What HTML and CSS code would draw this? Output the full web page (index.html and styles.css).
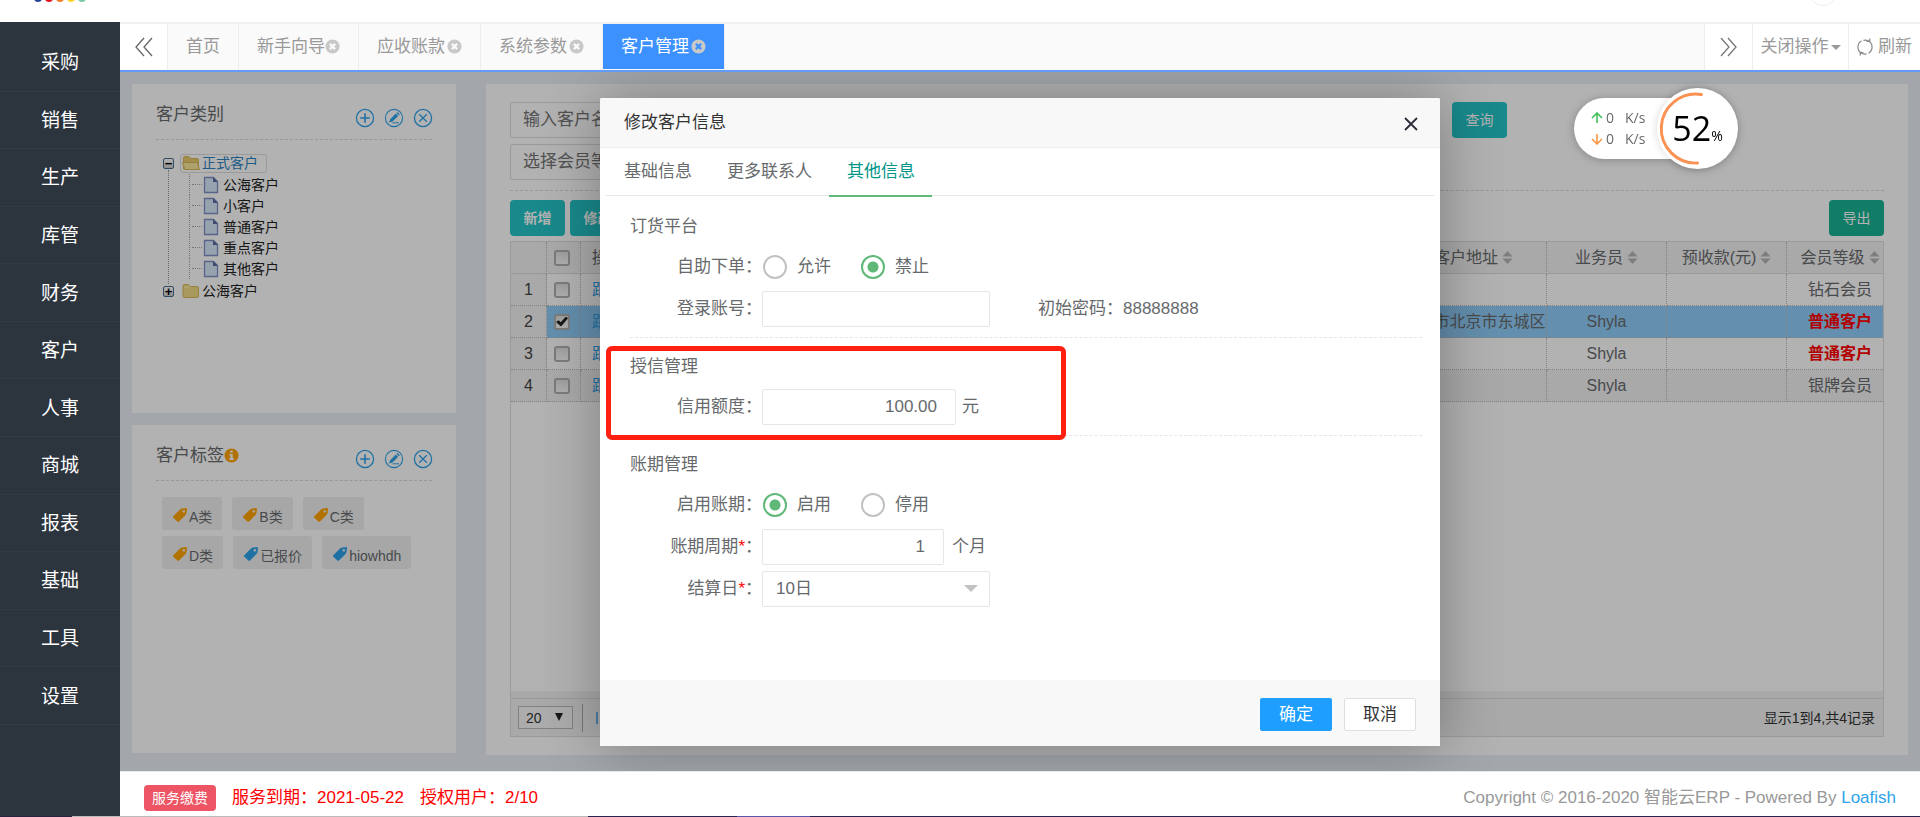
FILE: index.html
```html
<!DOCTYPE html>
<html lang="zh-CN">
<head>
<meta charset="utf-8">
<meta name="viewport" content="width=device-width, initial-scale=1">
<title>智能云ERP - 客户管理</title>
<link rel="stylesheet" href="styles.css">
</head>
<body>
<svg class="defs" aria-hidden="true">
  <symbol id="i-close" viewBox="0 0 16 16"><circle cx="8" cy="8" r="7.5" fill="#c8c8c8"/><path d="M5.2 5.2l5.6 5.6M10.8 5.2l-5.6 5.6" stroke="var(--cross, #fafafa)" stroke-width="2.4"/></symbol>
  <symbol id="i-add" viewBox="0 0 20 20"><g fill="none" stroke="currentColor" stroke-width="1.3"><circle cx="10" cy="10" r="8.6"/><path d="M10 5.2v9.6M5.2 10h9.6" stroke-width="1.6"/></g></symbol>
  <symbol id="i-edit" viewBox="0 0 20 20"><circle cx="10" cy="10" r="8.6" fill="none" stroke="currentColor" stroke-width="1.1"/><path d="M5 14.6l1.2-3.4 5.6-5.6 2.3 2.3-5.6 5.6zM12.5 4.9l1-1 2.3 2.3-1 1z" fill="currentColor"/><path d="M8.5 14.8h6.5" stroke="currentColor"/></symbol>
  <symbol id="i-del" viewBox="0 0 20 20"><g fill="none" stroke="currentColor" stroke-width="1.3"><circle cx="10" cy="10" r="8.6"/><path d="M6.2 6.2l7.6 7.6M13.8 6.2l-7.6 7.6"/></g></symbol>
  <symbol id="i-file" viewBox="0 0 16 18"><path d="M1.5 1.5h9l4 4v11h-13z" fill="#d9e8fb" stroke="#7f90c4" stroke-width="1.3"/><path d="M10 1v5h5z" fill="#5c6ca5"/></symbol>
  <symbol id="i-folder" viewBox="0 0 18 16"><path d="M1 3q0-1.500 1.500-1.500h4l2 2H15q1.500 0 1.500 1.500v8q0 1.500-1.500 1.500H2.500Q1 14.500 1 13z" fill="#f3dc84" stroke="#d8b95a"/><path d="M2.500 4h5" stroke="#fff3c0"/></symbol>
  <symbol id="i-folder-open" viewBox="0 0 18 16"><path d="M1.500 14V3q0-1.500 1.500-1.500h4l2 2h6q1.500 0 1.500 1.500v9z" fill="#e9cb6e" stroke="#d8b95a"/><path d="M.5 7.500h15l2 7H2.800z" fill="#f9e79a" stroke="#d8b95a"/></symbol>
  <symbol id="i-tag" viewBox="0 0 16 16"><path d="M1.300 9.300L8 2.600Q9 1.600 10.500 1.500L14 1q1.200 0 1 1.200L14.500 6q-.2 1.200-1 2L7 14.600q-.8.8-1.600 0L1.300 10.800q-.8-.8 0-1.500zM11.800 3a1.300 1.300 0 1 0 .01 0z" fill="currentColor" fill-rule="evenodd"/></symbol>
  <symbol id="i-sort" viewBox="0 0 12 14"><path d="M6 0l5.500 6H.5zM6 14l5.500-6H.5z" fill="#b5b5b5"/></symbol>
</svg>

<header class="topbar">
  <div class="logo"><i class="dot navy"></i><i class="dot red"></i><i class="dot orange"></i><i class="dot yellow"></i><i class="dot mint"></i></div>
  <div class="avatar"></div>
</header>

<div class="app">
  <nav class="sidebar">
    <a href="#">采购</a><a href="#">销售</a><a href="#">生产</a><a href="#">库管</a><a href="#">财务</a><a href="#">客户</a><a href="#">人事</a><a href="#">商城</a><a href="#">报表</a><a href="#">基础</a><a href="#">工具</a><a href="#">设置</a>
  </nav>

  <div class="main">
    <div class="tabbar">
      <button class="tool" aria-label="向左"><svg width="22" height="22" viewBox="0 0 22 22" fill="none" stroke="#666" stroke-width="1.3"><path d="M11 2L3 11l8 9M19 2l-8 9 8 9"/></svg></button>
      <a class="tab" href="#">首页</a>
      <a class="tab tight" href="#">新手向导<svg class="x"><use href="#i-close"/></svg></a>
      <a class="tab" href="#">应收账款<svg class="x"><use href="#i-close"/></svg></a>
      <a class="tab" href="#">系统参数<svg class="x"><use href="#i-close"/></svg></a>
      <a class="tab active" href="#">客户管理<svg class="x"><use href="#i-close"/></svg></a>
      <div class="tabtools">
        <button class="tool" aria-label="向右"><svg width="22" height="22" viewBox="0 0 22 22" fill="none" stroke="#777" stroke-width="1.3"><path d="M3 2l8 9-8 9M10 2l8 9-8 9"/></svg></button>
        <button class="tool closeop">关闭操作<i class="caret"></i></button>
        <button class="tool refresh"><svg width="16" height="18" viewBox="0 0 16 18" fill="none" stroke="#888" stroke-width="1.200"><path d="M4.500 15.200A7 7 0 0 1 4.500 3M11.500 3a7 7 0 0 1 0 12.200M6.500 2.300A7 7 0 0 1 12 3.200M9.500 15.800A7 7 0 0 1 4 15M12.800.5v3H9.500M3.200 17.500v-3H6.500"/></svg>刷新</button>
      </div>
    </div>

    <div class="content">
      <div class="left">
        <section class="card">
          <div class="cardhead"><h2>客户类别</h2>
            <div class="acts"><button aria-label="新增"><svg><use href="#i-add"/></svg></button><button aria-label="编辑"><svg><use href="#i-edit"/></svg></button><button aria-label="删除"><svg><use href="#i-del"/></svg></button></div>
          </div>
          <ul class="tree">
            <li class="open"><div class="node"><span class="toggle">−</span><span class="pick"><svg class="fold"><use href="#i-folder-open"/></svg>正式客户</span></div>
              <ul>
                <li><svg><use href="#i-file"/></svg>公海客户</li>
                <li><svg><use href="#i-file"/></svg>小客户</li>
                <li><svg><use href="#i-file"/></svg>普通客户</li>
                <li><svg><use href="#i-file"/></svg>重点客户</li>
                <li><svg><use href="#i-file"/></svg>其他客户</li>
              </ul>
            </li>
            <li><div class="node"><span class="toggle">+</span><span class="leaf"><svg class="fold"><use href="#i-folder"/></svg>公海客户</span></div></li>
          </ul>
        </section>
        <section class="card">
          <div class="cardhead"><h2>客户标签<svg class="info" viewBox="0 0 16 16"><circle cx="8" cy="8" r="7.500" fill="#ffa400"/><path d="M6.700 2.800h2.600v2.200H6.700zM5.800 6.300h3.500v4.700h1.200v1.700H5.700V11h1.100V8h-1z" fill="#fff"/></svg></h2>
            <div class="acts"><button aria-label="新增标签"><svg><use href="#i-add"/></svg></button><button aria-label="编辑标签"><svg><use href="#i-edit"/></svg></button><button aria-label="删除标签"><svg><use href="#i-del"/></svg></button></div>
          </div>
          <div class="tags">
            <span class="tag"><svg><use href="#i-tag"/></svg>A类</span>
            <span class="tag"><svg><use href="#i-tag"/></svg>B类</span>
            <span class="tag"><svg><use href="#i-tag"/></svg>C类</span>
            <span class="tag"><svg><use href="#i-tag"/></svg>D类</span>
            <span class="tag blue"><svg><use href="#i-tag"/></svg>已报价</span>
            <span class="tag blue"><svg><use href="#i-tag"/></svg>hiowhdh</span>
          </div>
        </section>
      </div>

      <section class="card right">
        <div class="search">
          <div class="fields">
            <input class="box" type="text" placeholder="输入客户名称" aria-label="客户名称">
            <input class="box" type="text" placeholder="选择会员等级" aria-label="会员等级">
          </div>
          <button class="btn query">查询</button>
        </div>
        <div class="actions"><button class="btn bold">新增</button><button class="btn bold">修改</button><button class="btn green">导出</button></div>
        <div class="grid">
          <table>
            <colgroup><col class="c-num"><col class="c-check"><col class="c-op"><col><col class="c-addr"><col class="c-mid"><col class="c-mid"><col class="c-level"></colgroup>
            <thead><tr><th></th><th><input type="checkbox" aria-label="全选"></th><th class="op">操作</th><th></th><th>客户地址<svg class="sort"><use href="#i-sort"/></svg></th><th>业务员<svg class="sort"><use href="#i-sort"/></svg></th><th>预收款(元)<svg class="sort"><use href="#i-sort"/></svg></th><th class="lv">会员等级<svg class="sort"><use href="#i-sort"/></svg></th></tr></thead>
            <tbody>
              <tr><td class="num">1</td><td><input type="checkbox" aria-label="选择第1行"></td><td class="op"><a href="#">跟进</a></td><td></td><td></td><td></td><td></td><td class="lv">钻石会员</td></tr>
              <tr class="sel"><td class="num">2</td><td><input type="checkbox" checked aria-label="选择第2行"></td><td class="op"><a href="#">跟进</a></td><td></td><td class="addr">北京市北京市东城区</td><td>Shyla</td><td></td><td class="lv hot">普通客户</td></tr>
              <tr><td class="num">3</td><td><input type="checkbox" aria-label="选择第3行"></td><td class="op"><a href="#">跟进</a></td><td></td><td></td><td>Shyla</td><td></td><td class="lv hot">普通客户</td></tr>
              <tr class="alt"><td class="num">4</td><td><input type="checkbox" aria-label="选择第4行"></td><td class="op"><a href="#">跟进</a></td><td></td><td></td><td>Shyla</td><td></td><td class="lv">银牌会员</td></tr>
            </tbody>
          </table>
          <div class="scroll"></div>
          <div class="pager">
            <span class="pagesize"><select aria-label="每页条数"><option>20</option></select></span>
            <span class="sep"></span>
            <button class="first" aria-label="首页"><svg width="16" height="16" viewBox="0 0 16 16" fill="#6ab4ea"><path d="M1 2h2v12H1zM14 2v12L5 8z"/></svg></button>
            <span class="count">显示1到4,共4记录</span>
          </div>
        </div>
      </section>

      <div class="overlay">
        <form class="modal" role="dialog" aria-labelledby="mt">
          <div class="mhead"><h1 id="mt">修改客户信息</h1><button type="button" aria-label="关闭"><svg width="16" height="16" viewBox="0 0 16 16" stroke="#2d2c3b" stroke-width="1.800"><path d="M2 2l12 12M14 2L2 14"/></svg></button></div>
          <div class="mtabs"><a href="#">基础信息</a><a href="#">更多联系人</a><a href="#" class="on">其他信息</a></div>
          <div class="mbody">
            <fieldset>
              <legend>订货平台</legend>
              <div class="row"><span class="lab">自助下单：</span><label class="radio"><input type="radio" name="self">允许</label><label class="radio"><input type="radio" name="self" checked>禁止</label></div>
              <div class="row"><label class="lab" for="acct">登录账号：</label><input class="field wide" id="acct" type="text"><span class="pwd">初始密码：88888888</span></div>
            </fieldset>
            <fieldset class="credit">
              <legend>授信管理</legend>
              <div class="row"><label class="lab" for="limit">信用额度：</label><input class="field num limit" id="limit" type="text" value="100.00"><span class="unit">元</span></div>
              <span class="mark"></span>
            </fieldset>
            <fieldset>
              <legend>账期管理</legend>
              <div class="row"><span class="lab">启用账期：</span><label class="radio"><input type="radio" name="term" checked>启用</label><label class="radio"><input type="radio" name="term">停用</label></div>
              <div class="row"><label class="lab" for="cyc">账期周期<b>*</b>：</label><input class="field num cycle" id="cyc" type="text" value="1"><span class="unit months">个月</span></div>
              <div class="row"><label class="lab" for="day">结算日<b>*</b>：</label><span class="pickday"><select class="field wide" id="day"><option>10日</option></select></span></div>
            </fieldset>
          </div>
          <div class="mfoot"><button type="button" class="ok">确定</button><button type="button" class="cancel">取消</button></div>
        </form>
      </div>

      <div class="meter">
        <div class="speeds">
          <div><svg width="12" height="12" viewBox="0 0 12 12" fill="none" stroke="#41c05b" stroke-width="1.600"><path d="M6 11V1.500M1 6l5-5 5 5"/></svg><span>0</span><span>K/s</span></div>
          <div><svg width="12" height="12" viewBox="0 0 12 12" fill="none" stroke="#fb9645" stroke-width="1.600"><path d="M6 1v9.500M1 6l5 5 5-5"/></svg><span>0</span><span>K/s</span></div>
        </div>
        <div class="gauge">
          <svg viewBox="0 0 82 82" fill="none" stroke="#fb9152" stroke-width="3" stroke-linecap="round"><path d="M45 6.500A35 35 0 1 0 41 76"/></svg>
          <span class="big">52</span><span class="pct">%</span>
        </div>
      </div>
    </div>

    <footer class="footer">
      <a class="badge" href="#">服务缴费</a><span class="due">服务到期：2021-05-22</span><span class="due">授权用户：2/10</span>
      <span class="copy">Copyright © 2016-2020 智能云ERP - Powered By <a href="#">Loafish</a></span>
    </footer>
  </div>
</div>
<div class="edge"></div>
</body>
</html>
```
FILE: styles.css
```css
* { box-sizing: border-box; }
body, h1, h2, ul, fieldset { margin: 0; padding: 0; }
body {
  display: flex;
  flex-direction: column;
  min-height: 100vh;
  font: 17px/24px "Liberation Sans", "Noto Sans CJK SC", sans-serif;
  color: #676a6c;
  background: #fff;
}
a { color: inherit; text-decoration: none; }
ul { list-style: none; }
button, input, select { font: inherit; color: inherit; }
button { border: 0; background: none; padding: 0; cursor: pointer; }
.defs { position: absolute; width: 0; height: 0; }

.topbar { display: flex; justify-content: space-between; align-items: flex-start; height: 22px; overflow: hidden; padding: 0 82px 0 34px; }
.logo { display: flex; gap: 3px; }
.dot { width: 8px; height: 8px; border-radius: 50%; margin-top: -6px; }
.navy { background: #24409a; }
.red { background: #e60d1c; }
.orange { background: #f47b20; }
.yellow { background: #fad21e; }
.mint { background: #74c8a2; }
.avatar { width: 30px; height: 30px; margin-top: -24px; border: 1px solid #eee; border-radius: 50%; }

.app { display: flex; flex: 1; }
.sidebar { display: flex; flex-direction: column; width: 120px; padding: 12px 0 91px; background: #2c343e; }
.sidebar a { flex: 1; display: flex; align-items: center; justify-content: center; padding-top: 2px; border-bottom: 1px solid #323a45; color: #fff; font-size: 19px; }
.main { flex: 1; min-width: 0; display: flex; flex-direction: column; }

.tabbar { display: flex; height: 50px; border-top: 2px solid #f0f0f0; border-bottom: 2px solid #639bfb; background: #fafafa; color: #999; }
.tool { display: flex; align-items: center; justify-content: center; width: 48px; background: #fff; border-right: 1px solid #eee; padding-bottom: 1px; }
.tab { display: flex; align-items: center; gap: 2px; padding: 0 18px 1px; border-right: 1px solid #eee; white-space: nowrap; }
.tab.tight { gap: 0; }
.tab.active { background: #3c91ff; color: #fff; --cross: #3c91ff; margin-bottom: 1px; padding-bottom: 0; }
.x { width: 15px; height: 15px; }
.tabtools { display: flex; margin-left: auto; border-left: 1px solid #eee; }
.closeop { width: 96px; gap: 2px; padding-bottom: 0; }
.refresh { width: 71px; gap: 5px; border: 0; }
.caret { border: 5px solid transparent; border-top-color: #999; border-bottom: 0; }

.content { position: relative; flex: 1; display: grid; grid-template-columns: 324px 1fr; gap: 30px; padding: 12px 12px 16px; background: #eaf0f7; }
.left { display: flex; flex-direction: column; gap: 12px; padding-bottom: 2px; }
.left .card { flex: 1; }
.card { background: #fff; padding: 18px 24px; min-width: 0; }
.cardhead { display: flex; justify-content: space-between; height: 38px; border-bottom: 1px dashed #d8d8d8; }
.cardhead h2 { display: flex; align-items: center; height: 26px; font-size: 17px; font-weight: 400; }
.info { width: 15px; height: 15px; }
.acts { display: flex; gap: 9px; padding-top: 6px; margin-right: -1px; color: #2ea3ea; }
.acts button, .acts svg { display: block; width: 20px; height: 20px; }

.tree { padding: 12px 7px 0; font-size: 14px; line-height: 22px; color: #222; }
.tree li { position: relative; }
.node { display: flex; align-items: center; height: 22px; }
.toggle { width: 11px; height: 11px; border: 1px solid #4a6a8a; border-radius: 2px; background: linear-gradient(#fff, #ccc); color: #000; font-size: 13px; font-weight: 700; line-height: 9px; text-align: center; }
.pick, .leaf { display: flex; align-items: center; gap: 2px; height: 19px; margin-left: 6px; padding: 0 8px 0 1px; border: 1px solid transparent; }
.pick { border-color: #ddd; border-radius: 3px; color: #2f84c0; }
.fold { width: 18px; height: 16px; }
.open::before { content: ""; position: absolute; left: 5px; top: 18px; bottom: -4px; border-left: 1px dotted #999; }
.tree ul { margin-left: 26px; padding-bottom: 1px; }
.tree ul li { display: flex; align-items: center; gap: 4px; height: 21px; padding-left: 13px; border-left: 1px dotted #aaa; }
.tree ul li::before { content: ""; position: absolute; left: 2px; width: 10px; border-top: 1px dotted #aaa; }
.tree ul svg { width: 16px; height: 18px; }

.tags { display: flex; flex-wrap: wrap; gap: 6px 10px; padding: 16px 6px 0; }
.tag { display: flex; align-items: center; gap: 1px; height: 33px; padding: 8px 10px 0; border-radius: 3px; background: #f0f0f0; font-size: 14px; }
.tag svg { width: 16px; height: 16px; color: #ffa400; margin-top: -4px; }
.tag.blue svg { color: #2ea3ea; }

.right { display: flex; flex-direction: column; }
.search { display: flex; height: 89px; border-bottom: 1px dashed #d8d8d8; }
.fields { display: flex; flex-direction: column; gap: 6px; width: 942px; }
.box { width: 228px; height: 36px; padding: 0 12px; border: 1px solid #ddd; border-radius: 2px; background: #fff; }
.box::placeholder { color: #757575; }
.btn { width: 55px; height: 36px; border-radius: 4px; background: #24c5c7; color: #fff; font-size: 14px; }
.bold { font-weight: 700; }
.green { background: #1ab394; }
.actions { display: flex; gap: 5px; padding: 9px 0 5px; }
.actions .green { margin-left: auto; }

.grid { flex: 1; display: flex; flex-direction: column; border: 1px solid #ddd; }
table { width: 100%; table-layout: fixed; border-collapse: separate; border-spacing: 0; font-size: 16px; }
.c-num { width: 36px; }
.c-check { width: 34px; }
.c-op { width: 120px; }
.c-addr { width: 146px; }
.c-mid { width: 120px; }
.c-level { width: 96px; }
th, td { height: 32px; padding: 0; border-right: 1px dotted #bbb; border-bottom: 1px dotted #bbb; font-weight: 400; text-align: center; white-space: nowrap; overflow: hidden; }
th { background: #f2f2f2; border-bottom: 1px solid #ddd; }
th:last-child, td:last-child { border-right: 0; }
.num { background: #f2f2f2; }
td.num { color: #444; }
.op { text-align: left; padding-left: 11px; }
.op a { color: #2ea3ea; }
.sel td:not(.num) { background: #90cdf9; }
.alt td { background: #f2f2f2; }
.lv { padding-left: 10px; }
td.hot { color: #f00; font-weight: 700; }
.sort { width: 11px; height: 13px; margin-left: 4px; vertical-align: -1px; }
[type="checkbox"] { appearance: none; position: relative; display: block; width: 16px; height: 16px; margin: 0 0 0 7px; border: 2px solid #b0b0b0; border-radius: 3px; background: linear-gradient(#e4e4e4, #fafafa); }
[type="checkbox"]:checked::after { content: ""; position: absolute; inset: 1px 0; background: #222; clip-path: polygon(0 55%, 22% 38%, 40% 58%, 82% 0, 100% 18%, 42% 100%); }
.scroll { height: 7px; margin-top: auto; background: #f2f2f2; }
.pager { display: flex; align-items: center; height: 38px; padding: 0 8px 0 7px; border-top: 1px solid #ddd; background: #f2f2f2; font-size: 14px; color: #333; }
.pagesize { position: relative; }
.pagesize select { appearance: none; display: block; width: 55px; height: 23px; padding: 0 7px; border: 1px solid #bbb; border-radius: 0; background: #f7f7f7; line-height: 20px; }
.pagesize::after { content: ""; position: absolute; right: 10px; top: 7px; border: 4px solid transparent; border-top: 8px solid #222; border-bottom: 0; }
.sep { width: 1px; height: 28px; margin: 0 12px 0 9px; background: #aaa; }
.first svg { display: block; }
.count { margin-left: auto; }

.overlay { position: absolute; inset: 0; display: flex; justify-content: center; align-items: flex-start; padding-top: 26px; background: rgba(0, 0, 0, .3); overflow: hidden; }
.modal { width: 840px; background: #fff; border-radius: 2px; box-shadow: 1px 1px 60px rgba(0, 0, 0, .3); }
.mhead { display: flex; justify-content: space-between; align-items: center; height: 50px; padding: 0 21px 0 24px; border-bottom: 1px solid #eee; border-radius: 2px 2px 0 0; background: #f8f8f8; }
.mhead h1 { font-size: 17px; font-weight: 400; color: #333; }
.mhead svg { display: block; margin-top: 3px; }
.mtabs { display: flex; height: 48px; margin: 0 6px; border-bottom: 1px solid #e6e6e6; }
.mtabs a { padding: 12px 17px 0 18px; }
.mtabs .on { color: #009688; border-bottom: 2px solid #5fb878; margin-bottom: -2px; }
.mbody { padding: 2px 18px 63px 30px; }
fieldset { position: relative; display: flex; flex-direction: column; gap: 6px; min-width: 0; padding: 16px 0 10px; border: 0; border-bottom: 1px dashed #e6e6e6; }
fieldset:last-child { border: 0; }
legend { float: left; width: 100%; padding: 0; margin-bottom: 3px; line-height: 26px; }
.row { display: flex; align-items: center; height: 36px; }
.lab { width: 132px; text-align: right; white-space: nowrap; }
.lab b { color: #f00; font-weight: 400; }
.radio { display: flex; align-items: center; gap: 10px; width: 98px; }
[type="radio"] { appearance: none; width: 24px; height: 24px; margin: 0 0 0 1px; border: 2px solid #c2c2c2; border-radius: 50%; }
[type="radio"]:checked { border-color: #5fb878; background: radial-gradient(circle, #5fb878 5px, #fff 6px); }
.field { height: 36px; padding: 0 13px; border: 1px solid #e6e6e6; border-radius: 2px; background: #fff; }
.wide { width: 228px; }
.field.num { text-align: right; padding-right: 18px; }
.limit { width: 194px; }
.cycle { width: 182px; }
.unit { margin-left: 6px; }
.months { margin-left: 8px; }
.pwd { margin-left: 48px; }
.pickday { position: relative; }
.pickday select { appearance: none; display: block; }
.pickday::after { content: ""; position: absolute; right: 12px; top: 14px; border: 7px solid transparent; border-top-color: #c2c2c2; border-bottom: 0; }
.mark { position: absolute; left: -24px; top: 8px; width: 460px; height: 94px; border: 5px solid #ff2012; border-radius: 6px; pointer-events: none; z-index: 1; }
.mfoot { display: flex; justify-content: flex-end; gap: 12px; padding: 18px 24px 15px; background: #f8f8f8; }
.mfoot button { width: 72px; height: 33px; border-radius: 2px; }
.mfoot .ok { background: #1e9fff; color: #fff; }
.mfoot .cancel { border: 1px solid #dedede; background: #fff; color: #333; }

.meter { position: absolute; right: 182px; top: 16px; display: flex; align-items: center; font-family: "Open Sans", "Noto Sans", sans-serif; filter: drop-shadow(0 1px 4px rgba(0, 0, 0, .25)); }
.speeds { width: 123px; height: 61px; margin-right: -40px; padding: 9px 0 0 17px; border-radius: 31px 0 0 31px; background: #fff; font-size: 14px; line-height: 21px; }
.speeds div { display: flex; align-items: center; gap: 3px; }
.speeds span:last-child { margin-left: 8px; }
.gauge { position: relative; display: flex; align-items: baseline; justify-content: center; width: 81px; height: 81px; border-radius: 50%; background: #fff; color: #000; line-height: 80px; box-shadow: -2px 0 6px rgba(0, 0, 0, .1); }
.gauge svg { position: absolute; inset: 0; }
.big { font-size: 34px; }
.pct { font-size: 14px; }

.footer { display: flex; align-items: center; height: 45px; padding: 8px 24px 0; border-top: 1px solid #e7eaec; background: #fff; }
.badge { padding: 1px 8px; border-radius: 4px; background: #ed5565; color: #fff; font-size: 14px; }
.due { margin-left: 16px; color: #f00; }
.copy { margin-left: auto; color: #999; }
.copy a { color: #2ea3ea; }
.edge { height: 1px; background: linear-gradient(90deg, #2a2340 72px, #bbb 72px 588px, #2a2450 588px 737px, #5a55a8 737px 810px, #2a2450 810px); }
```
